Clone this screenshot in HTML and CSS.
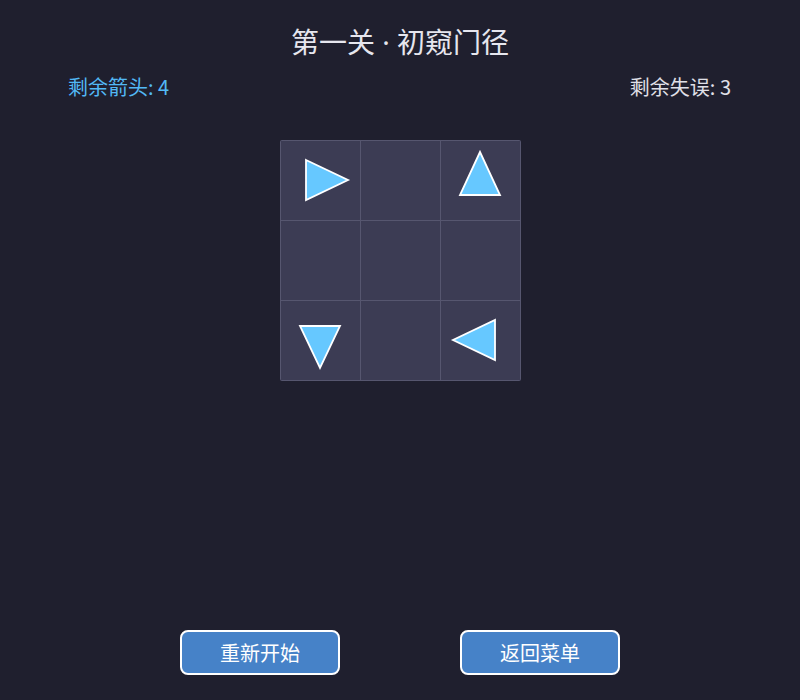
FILE: index.html
```html
<!DOCTYPE html>
<html lang="zh">
<head>
<meta charset="utf-8">
<link rel="stylesheet" href="styles.css">
</head>
<body>
<div class="page">
  <h1 class="title">第一关<span class="sep"> · </span>初窥门径</h1>
  <div class="stats">
    <span class="stat arrows">剩余箭头: 4</span>
    <span class="stat misses">剩余失误: 3</span>
  </div>
  <div class="board-wrap">
    <div class="board">
      <div class="cell"><svg class="arrow" viewBox="0 0 79 79"><polygon points="25,19 67,39 25,59"/></svg></div>
      <div class="cell"></div>
      <div class="cell"><svg class="arrow" viewBox="0 0 79 79"><polygon points="39,11 19,54 59,54"/></svg></div>
      <div class="cell"></div>
      <div class="cell"></div>
      <div class="cell"></div>
      <div class="cell"><svg class="arrow" viewBox="0 0 79 79"><polygon points="19,25 59,25 39,67"/></svg></div>
      <div class="cell"></div>
      <div class="cell"><svg class="arrow" viewBox="0 0 79 79"><polygon points="54,19 54,59 12,39"/></svg></div>
    </div>
  </div>
  <div class="actions">
    <button class="btn">重新开始</button>
    <button class="btn">返回菜单</button>
  </div>
</div>
</body>
</html>
```

FILE: styles.css
```css
html, body {
  margin: 0;
  padding: 0;
  background: #1f1f2e;
  font-family: "Noto Sans CJK SC", "Noto Sans", sans-serif;
}
.page {
  width: 800px;
  height: 700px;
  display: flex;
  flex-direction: column;
}
.title {
  margin: 21px 0 0;
  height: 40px;
  line-height: 40px;
  text-align: center;
  font-size: 28px;
  font-weight: normal;
  color: #e6e6ee;
}
.sep {
  font-family: "Noto Sans", sans-serif;
}
.stats {
  display: flex;
  justify-content: space-between;
  padding: 0 69px 0 68px;
  margin-top: 11px;
  height: 30px;
  line-height: 30px;
  font-size: 20px;
}
.arrows { color: #52b8f5; }
.misses { color: #e0e0e8; }
.board-wrap {
  display: flex;
  justify-content: center;
  margin-top: 38px;
  padding-left: 1px;
}
.board {
  display: grid;
  grid-template-columns: repeat(3, 79px);
  grid-template-rows: repeat(3, 79px);
  gap: 1px;
  padding: 1px;
  background: #56566f;
  border-radius: 2px;
}
.cell {
  background: #3c3c54;
}
.arrow {
  display: block;
  width: 79px;
  height: 79px;
  overflow: visible;
}
.arrow polygon {
  fill: #66c8ff;
  stroke: #ffffff;
  stroke-width: 1.8;
  stroke-linejoin: miter;
}
.actions {
  margin-top: auto;
  margin-bottom: 25px;
  display: flex;
  justify-content: center;
  gap: 120px;
}
.btn {
  width: 160px;
  height: 45px;
  background: #4682c8;
  border: 2px solid #ffffff;
  border-radius: 8px;
  color: #ffffff;
  font-family: "Noto Sans CJK SC", "Noto Sans", sans-serif;
  font-size: 20px;
  padding: 0;
}
```
